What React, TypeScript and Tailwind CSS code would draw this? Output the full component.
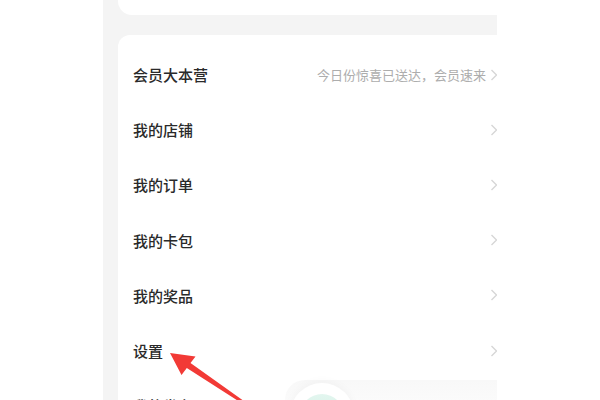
import React from "react";

const rows = ["我的店铺", "我的订单", "我的卡包", "我的奖品", "设置", "我的发布"];

function Chevron() {
  return (
    <svg width="8" height="12" viewBox="0 0 8 12" className="shrink-0">
      <path d="M1.5 1 L6.5 6 L1.5 11" fill="none" stroke="#d6d6d6" strokeWidth="1.4" />
    </svg>
  );
}

export default function App() {
  return (
    <div
      className="relative w-[600px] h-[400px] bg-white overflow-hidden"
      style={{ fontFamily: '"Noto Sans CJK SC", "Noto Sans", sans-serif' }}
    >
      <div className="ml-[103px] w-[394px] h-[400px] bg-[#f4f4f4] overflow-hidden flex flex-col">
        <div className="ml-[15px] w-[392px] h-[15px] shrink-0 bg-white rounded-bl-[14px]" />
        <div className="ml-[15px] mt-[20px] w-[392px] shrink-0 bg-white rounded-tl-[12px] pt-[12px] pl-[15px] pr-[12px]">
          <div className="h-[55px] flex items-center justify-between">
            <span className="text-[15px] leading-none font-medium text-[#2a2a2a]">会员大本营</span>
            <div className="flex items-center gap-[4px]">
              <span className="text-[13px] leading-none text-[#adadad]">今日份惊喜已送达，会员速来</span>
              <Chevron />
            </div>
          </div>
          {rows.map((r) => (
            <div key={r} className="h-[55.25px] flex items-center justify-between">
              <span className="text-[15px] leading-none font-medium text-[#2a2a2a]">{r}</span>
              <Chevron />
            </div>
          ))}
        </div>
      </div>

      {/* bottom floating bar hint */}
      <div className="absolute left-[285px] top-[380px] w-[212px] h-[30px] bg-gradient-to-b from-[#f8f8f8] to-[#fcfcfc] rounded-tl-[20px]" />
      <div className="absolute left-[290px] top-[383px] w-[64px] h-[64px] rounded-full bg-white shadow-[0_-2px_8px_rgba(0,0,0,0.03)] flex items-start justify-center">
        <div className="mt-[11px] w-[44px] h-[44px] rounded-full bg-gradient-to-b from-[#e3f6ef] to-[#cdeee2]" />
      </div>

      {/* red arrow */}
      <svg className="absolute left-0 top-0" width="600" height="400" viewBox="0 0 600 400">
        <polygon
          points="170,353 195.5,356.5 190.5,363 245.5,402.2 243.9,404.6 186.8,368 181.5,375"
          fill="#f23a36"
        />
      </svg>
    </div>
  );
}
